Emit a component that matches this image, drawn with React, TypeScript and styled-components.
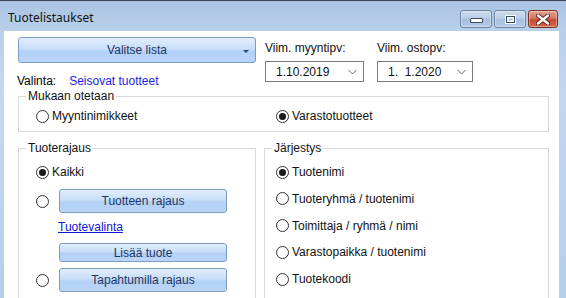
import styled, { createGlobalStyle } from "styled-components";

const GlobalStyle = createGlobalStyle`
    html, body {
        margin: 0;
        padding: 0;
        overflow: hidden;
    }
    body {
        font-family: "Liberation Sans", Arial, sans-serif;
        font-size: 12px;
        color: #000;
    }
`;

const Window = styled.div`
    width: 566px;
    height: 298px;
    overflow: hidden;
    display: flex;
    flex-direction: column;
    box-sizing: border-box;
    border-top: 1px solid #3c4652;
    background: linear-gradient(to bottom, #a9c3e1 0px, #b9d0ea 30px, #c3d8ef 90px, #b6cfea 100%);
`;

const TitleBar = styled.div`
    height: 30px;
    flex-shrink: 0;
    display: flex;
    align-items: center;
    justify-content: space-between;
    padding: 0 8px 0 8px;
`;

const TitleText = styled.div`
    font-family: "Noto Sans", "Open Sans", sans-serif;
    font-size: 12px;
    color: #111;
    padding-top: 3px;
`;

const Controls = styled.div`
    display: flex;
    gap: 2px;
    align-self: flex-start;
    margin-top: 9px;
`;

const CtrlButton = styled.div<{ $close?: boolean }>`
    width: ${(p) => (p.$close ? 30 : 32)}px;
    height: 18px;
    box-sizing: border-box;
    border: 1px solid ${(p) => (p.$close ? "#7a3128" : "#6d84a2")};
    border-radius: 3px;
    display: flex;
    align-items: center;
    justify-content: center;
    background: ${(p) =>
        p.$close
            ? "linear-gradient(to bottom, #e4a394 0%, #d6765f 45%, #c24a33 55%, #cf6b4f 100%)"
            : "linear-gradient(to bottom, #cddcee 0%, #b8cde6 45%, #a6bfdd 55%, #b5cbe5 100%)"};
    box-shadow: inset 0 0 0 1px rgba(255, 255, 255, 0.35);
`;

const MinGlyph = styled.div`
    width: 11px;
    height: 3px;
    background: #fff;
    border: 1px solid #3c4b5f;
    border-radius: 1px;
    margin-top: 3px;
`;

const MaxGlyph = styled.div`
    width: 7px;
    height: 5px;
    border: 1px solid #3c4b5f;
    box-shadow: inset 0 0 0 1.5px #fff, 0 0 0 1px #fff;
    background: #a9c0dc;
`;

const Body = styled.div`
    flex: 1;
    margin: 0 7px 0 4px;
    background: #fff;
    padding: 6px 0 0 14px;
    display: flex;
    flex-direction: column;
`;

const TopRow = styled.div`
    display: flex;
    align-items: flex-start;
`;

const ListColumn = styled.div`
    width: 238px;
    display: flex;
    flex-direction: column;
`;

const BlueButton = styled.div<{ $h: number; $w?: number }>`
    height: ${(p) => p.$h}px;
    width: ${(p) => (p.$w ? `${p.$w}px` : "auto")};
    box-sizing: border-box;
    border: 1px solid #7d9cc4;
    border-radius: 3px;
    background: linear-gradient(to bottom, #e2eefc 0%, #c9def9 45%, #b3d1f7 55%, #b9d5f8 100%);
    color: #1d3561;
    display: flex;
    align-items: center;
    justify-content: center;
    position: relative;
    font-size: 12px;
`;

const DropArrow = styled.span`
    position: absolute;
    right: 6px;
    top: 12px;
    width: 0;
    height: 0;
    border-left: 3px solid transparent;
    border-right: 3px solid transparent;
    border-top: 3px solid #2a4677;
`;

const ValintaRow = styled.div`
    display: flex;
    gap: 13px;
    margin-top: 11px;
    line-height: 14px;
    margin-left: -1px;
`;

const ValintaValue = styled.span`
    color: #1c1ce0;
`;

const DateField = styled.div<{ $w: number; $ml: number }>`
    width: ${(p) => p.$w}px;
    margin-left: ${(p) => p.$ml}px;
    display: flex;
    flex-direction: column;
    gap: 6px;
    padding-top: 4px;
    line-height: 14px;
    color: #111;
`;

const SelectBox = styled.div`
    height: 21px;
    box-sizing: border-box;
    border: 1px solid #7a7a7a;
    background: #fff;
    display: flex;
    align-items: center;
    justify-content: space-between;
    padding: 0 6px 0 10px;
    white-space: pre;
`;

const Chevron = () => (
    <svg width="9" height="6" viewBox="0 0 9 6">
        <path d="M0.5 1 L4.5 5 L8.5 1" fill="none" stroke="#666" strokeWidth="1" />
    </svg>
);

const Group = styled.fieldset<{ $w: number; $mt?: number }>`
    width: ${(p) => p.$w}px;
    box-sizing: border-box;
    margin: ${(p) => p.$mt ?? 0}px 0 0 0;
    border: 1px solid #d9d9d9;
    padding: 0;
    min-width: 0;
`;

const Legend = styled.legend`
    margin-left: 7px;
    padding: 0 2px;
    line-height: 14px;
    color: #111;
`;

const MukaanRow = styled.div`
    display: grid;
    grid-template-columns: 240px auto;
    padding: 5px 0 7px 17px;
`;

const RadioItem = styled.div`
    display: flex;
    align-items: center;
    gap: 3px;
    height: 16px;
    line-height: 14px;
    color: #111;
`;

const RadioCircle = styled.span<{ $on?: boolean }>`
    width: 13px;
    height: 13px;
    box-sizing: border-box;
    border: 1px solid #333;
    border-radius: 50%;
    background: #fff;
    display: flex;
    align-items: center;
    justify-content: center;
    flex-shrink: 0;

    &::after {
        content: "";
        width: 7px;
        height: 7px;
        border-radius: 50%;
        background: ${(p) => (p.$on ? "#1a1a1a" : "transparent")};
    }
`;

const LowerRow = styled.div`
    display: flex;
    gap: 8px;
    margin-top: 9px;
    flex: 1;
`;

const RajausBody = styled.div`
    display: flex;
    flex-direction: column;
    padding: 9px 0 20px 17px;
`;

const ButtonRow = styled.div<{ $mt: number }>`
    display: flex;
    align-items: center;
    gap: 10px;
    margin-top: ${(p) => p.$mt}px;
`;

const Indented = styled.div<{ $mt: number }>`
    margin-left: 23px;
    margin-top: ${(p) => p.$mt}px;
    display: flex;
`;

const Link = styled.a`
    color: #1414d8;
    text-decoration: underline;
    line-height: 14px;
    margin-left: -1px;
`;

const JarjestysBody = styled.div`
    display: flex;
    flex-direction: column;
    gap: 10.75px;
    padding: 9px 0 20px 11px;
`;

const sortOptions = [
    "Tuotenimi",
    "Tuoteryhmä / tuotenimi",
    "Toimittaja / ryhmä / nimi",
    "Varastopaikka / tuotenimi",
    "Tuotekoodi",
];

export default function App() {
    return (
        <>
            <GlobalStyle />
            <Window>
                <TitleBar>
                    <TitleText>Tuotelistaukset</TitleText>
                    <Controls>
                        <CtrlButton>
                            <MinGlyph />
                        </CtrlButton>
                        <CtrlButton>
                            <MaxGlyph />
                        </CtrlButton>
                        <CtrlButton $close>
                            <svg width="14" height="11" viewBox="0 0 14 11">
                                <path
                                    d="M2 1.5 L12 9.5 M12 1.5 L2 9.5"
                                    stroke="#5a2018"
                                    strokeWidth="4.2"
                                    strokeLinecap="round"
                                />
                                <path
                                    d="M2 1.5 L12 9.5 M12 1.5 L2 9.5"
                                    stroke="#fff"
                                    strokeWidth="2.4"
                                    strokeLinecap="round"
                                />
                            </svg>
                        </CtrlButton>
                    </Controls>
                </TitleBar>
                <Body>
                    <TopRow>
                        <ListColumn>
                            <BlueButton $h={26}>
                                Valitse lista
                                <DropArrow />
                            </BlueButton>
                            <ValintaRow>
                                <span>Valinta:</span>
                                <ValintaValue>Seisovat tuotteet</ValintaValue>
                            </ValintaRow>
                        </ListColumn>
                        <DateField $w={99} $ml={9}>
                            <span>Viim. myyntipv:</span>
                            <SelectBox>
                                <span>1.10.2019</span>
                                <Chevron />
                            </SelectBox>
                        </DateField>
                        <DateField $w={96} $ml={13}>
                            <span>Viim. ostopv:</span>
                            <SelectBox>
                                <span>1.  1.2020</span>
                                <Chevron />
                            </SelectBox>
                        </DateField>
                    </TopRow>
                    <Group $w={531} $mt={1}>
                        <Legend>Mukaan otetaan</Legend>
                        <MukaanRow>
                            <RadioItem>
                                <RadioCircle />
                                Myyntinimikkeet
                            </RadioItem>
                            <RadioItem>
                                <RadioCircle $on />
                                Varastotuotteet
                            </RadioItem>
                        </MukaanRow>
                    </Group>
                    <LowerRow>
                        <Group $w={238}>
                            <Legend>Tuoterajaus</Legend>
                            <RajausBody>
                                <RadioItem>
                                    <RadioCircle $on />
                                    Kaikki
                                </RadioItem>
                                <ButtonRow $mt={9}>
                                    <RadioCircle />
                                    <BlueButton $h={24} $w={168}>
                                        Tuotteen rajaus
                                    </BlueButton>
                                </ButtonRow>
                                <Indented $mt={7}>
                                    <Link>Tuotevalinta</Link>
                                </Indented>
                                <Indented $mt={9}>
                                    <BlueButton $h={19} $w={168}>
                                        Lisää tuote
                                    </BlueButton>
                                </Indented>
                                <ButtonRow $mt={6}>
                                    <RadioCircle />
                                    <BlueButton $h={24} $w={168}>
                                        Tapahtumilla rajaus
                                    </BlueButton>
                                </ButtonRow>
                            </RajausBody>
                        </Group>
                        <Group $w={285}>
                            <Legend>Järjestys</Legend>
                            <JarjestysBody>
                                {sortOptions.map((o, i) => (
                                    <RadioItem key={o}>
                                        <RadioCircle $on={i === 0} />
                                        {o}
                                    </RadioItem>
                                ))}
                            </JarjestysBody>
                        </Group>
                    </LowerRow>
                </Body>
            </Window>
        </>
    );
}
